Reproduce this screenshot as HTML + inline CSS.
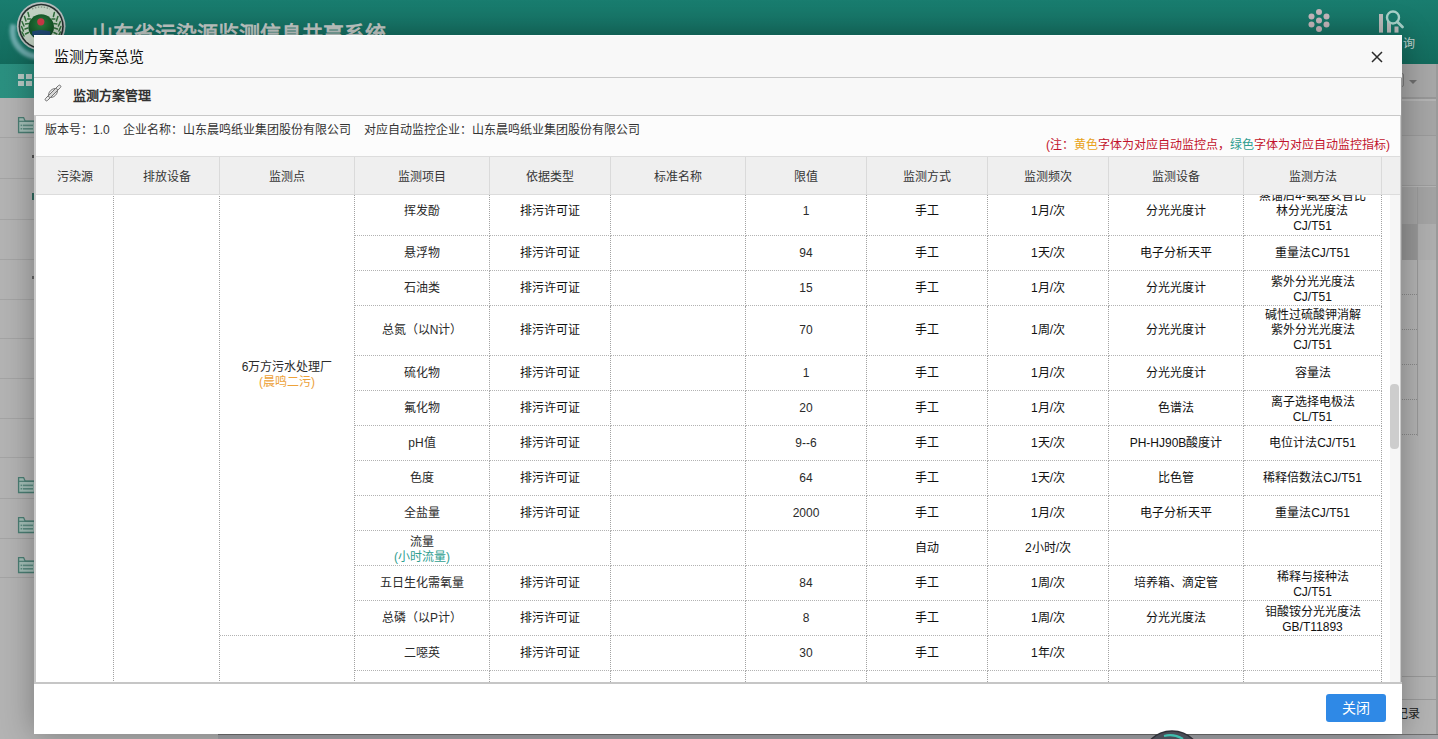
<!DOCTYPE html>
<html lang="zh-CN"><head><meta charset="utf-8">
<style>
*{margin:0;padding:0;box-sizing:border-box}
html,body{width:1438px;height:739px;overflow:hidden}
body{position:relative;background:#b3b3b3;font-family:"Liberation Sans",sans-serif;font-size:12px;color:#333}
.abs{position:absolute}
#hdr{position:absolute;left:0;top:0;width:1438px;height:64px;background:linear-gradient(#197d6f,#136b5d)}
#nav{position:absolute;left:0;top:64px;width:300px;height:34px;background:linear-gradient(90deg,#2b9080,#268676)}
#ttl{position:absolute;left:92px;top:22px;font-size:21px;line-height:24px;font-weight:bold;color:#c6cdca;white-space:nowrap}
.sl{position:absolute;left:0;width:34px;height:1px;background:#a4a4a4}
.fd{position:absolute;left:17px;width:18px;height:18px}
#modal{position:absolute;left:34px;top:35px;width:1368px;height:699px;background:#fff;box-shadow:0 0 30px rgba(0,0,0,.32)}
#mt{position:absolute;left:34px;top:35px;width:1368px;height:43px;background:#f8f8f8;border-top:1px solid #fcfefe;border-bottom:1px solid #c8c8c8}
#mt .tx{position:absolute;left:20px;top:9px;font-size:15px;font-weight:300;color:#111}
#close{position:absolute;left:1371px;top:51px;width:12px;height:12px}
#ph{position:absolute;left:34px;top:78px;width:1367px;height:38px;background:#f8f8f8;border-bottom:1px solid #c8c8c8}
#ph .tx{position:absolute;left:39px;top:7px;font-size:13px;font-weight:bold;color:#333}
#cw{position:absolute;left:34px;top:116px;width:1367px;height:566px;border-left:2px solid #c8c8c8;border-right:1px solid #c8c8c8}
#strip{position:absolute;left:1401px;top:78px;width:1px;height:604px;background:#989898}
#info{position:absolute;left:35px;top:116px;width:1365px;height:40px;background:#fcfcfc}
#info .tx{position:absolute;left:10px;top:4px;white-space:nowrap;color:#333}
#info .note{position:absolute;right:10px;top:19px;white-space:nowrap;color:#c2132b}
.yel{color:#e8a317} .grn{color:#2f9e90} .org{color:#eda23a}
#th{position:absolute;left:35px;top:156px;width:1365px;height:39px;background:#efefef;border-top:1px solid #ddd;border-bottom:1px solid #dcdcdc}
.hc{position:absolute;top:0;height:37px;line-height:40px;text-align:center;color:#363636;border-right:1px solid #dadada}
#tb{position:absolute;left:35px;top:195px;width:1365px;height:487px;overflow:hidden;background:#fff}
.c{position:absolute;display:flex;align-items:center;justify-content:center;text-align:center;line-height:15px;border-right:1px dotted #a2a2a2;border-bottom:1px dotted #b2b2b2}
.t0{color:#111} .t3{color:#2a2a2a} .ml2{padding-top:3px}
#sb{position:absolute;left:1355px;top:0;width:10px;height:488px;background:#f6f6f6}
#thumb{position:absolute;left:0;top:189px;width:9px;height:65px;background:#cdcdcd;border-radius:4px}
#ft{position:absolute;left:34px;top:682px;width:1368px;height:52px;border-top:2px solid #c6c6c6;background:#fff}
#btn{position:absolute;left:1326px;top:694px;width:60px;height:28px;background:#2f89e6;border-radius:3px;color:#fff;font-size:14px;line-height:28px;text-align:center}
</style></head><body>
<div id="hdr">
  <svg class="abs" style="left:0;top:0" width="80" height="64" viewBox="0 0 80 64">
<defs><filter id="bl" x="-50%" y="-50%" width="200%" height="200%"><feGaussianBlur stdDeviation="1.6"/></filter>
<radialGradient id="ball" cx="0.5" cy="0.4" r="0.6"><stop offset="0" stop-color="#2a8040"/><stop offset="1" stop-color="#0e4a20"/></radialGradient></defs>
<path d="M13.4 24.4 A25.5 25.5 0 0 0 44.6 55.6" fill="none" stroke="#9ccbd4" stroke-width="6" opacity="0.65" filter="url(#bl)"/>
<circle cx="41.2" cy="26.3" r="24.3" fill="#b5bdbd"/>
<circle cx="41.2" cy="26.3" r="22.6" fill="#27302f"/>
<circle cx="41.2" cy="26.3" r="21" fill="#c3d3c4"/>
<g stroke="#2f6e3a" stroke-width="1.5" fill="none" stroke-linecap="round"><path d="M24 36 l-2 -4 M23.5 31 l-2 -4.5 M24 26 l-2 -4.5 M26 21 l-1.5 -4.5 M29 16.5 l-1 -4"/><path d="M25.5 34 l3 -1.5 M25 29 l3 -1 M25.5 24 l3 -0.5 M27.5 19 l3 0"/><path d="M58.4 36 l2 -4 M58.9 31 l2 -4.5 M58.4 26 l2 -4.5 M56.4 21 l1.5 -4.5 M53.4 16.5 l1 -4"/><path d="M56.9 34 l-3 -1.5 M57.4 29 l-3 -1 M56.9 24 l-3 -0.5 M54.9 19 l-3 0"/></g>
<path d="M32 9 Q41 5 50 9" fill="none" stroke="#8a9a8c" stroke-width="1.4" stroke-dasharray="1.5 1.5"/>
<circle cx="41.2" cy="27" r="12.8" fill="url(#ball)"/>
<circle cx="40.8" cy="21.8" r="3.6" fill="#cf3a48"/>
<path d="M32 31.5 Q41 28.5 50.5 31.5 L50 36 Q41 33 32.5 36 Z" fill="#23438a" opacity="0.8"/>
</svg>
  <div id="ttl">山东省污染源监测信息共享系统</div>
  <div class="abs" style="left:1308px;top:9px;width:22px;height:23px;">
    <svg width="22" height="23" viewBox="0 0 22 23"><g fill="#c7b8bd"><circle cx="11" cy="3" r="3"/><circle cx="3.5" cy="7.5" r="3"/><circle cx="18.5" cy="7.5" r="3"/><circle cx="11" cy="11.5" r="3"/><circle cx="3.5" cy="15.5" r="3"/><circle cx="18.5" cy="15.5" r="3"/><circle cx="11" cy="20" r="3"/></g></svg>
  </div>
  <svg class="abs" style="left:1376px;top:8px" width="32" height="28" viewBox="0 0 32 28"><g fill="#bdbdbd"><rect x="3" y="6" width="4" height="18.6"/><rect x="11" y="10" width="4" height="14.6"/><rect x="18.5" y="18.5" width="4" height="6.1"/></g><circle cx="17" cy="9.5" r="6" fill="#197a6c" stroke="#a9d2ca" stroke-width="2.4"/><path d="M21.2 13.7 L26.5 19" stroke="#a9d2ca" stroke-width="2.8" stroke-linecap="round"/></svg>
  <div class="abs" style="left:1403px;top:36px;font-size:12px;line-height:16px;color:#c3d3cf">询</div>
</div>
<div id="nav"><svg class="abs" style="left:18px;top:74px;position:fixed" width="15" height="13" viewBox="0 0 15 13"><g fill="#b7c9c4"><rect x="0" y="0" width="6" height="5"/><rect x="8" y="0" width="6" height="5"/><rect x="0" y="7" width="6" height="5"/><rect x="8" y="7" width="6" height="5"/></g></svg></div>
<div class="sl" style="top:137px"></div><div class="sl" style="top:178px"></div><div class="sl" style="top:219px"></div><div class="sl" style="top:259px"></div><div class="sl" style="top:299px"></div><div class="sl" style="top:338px"></div><div class="sl" style="top:378px"></div><div class="sl" style="top:418px"></div><div class="sl" style="top:457px"></div><div class="sl" style="top:498px"></div><div class="sl" style="top:538px"></div><div class="sl" style="top:577px"></div>
<div class="abs" style="left:32px;top:155px;width:2px;height:3px;background:#555"></div>
<div class="abs" style="left:32px;top:193px;width:2px;height:7px;background:#2f6a5e"></div>
<div class="abs" style="left:32px;top:276px;width:2px;height:3px;background:#666"></div>
<div class="fd" style="top:116px"><svg width="18" height="18" viewBox="0 0 18 18"><path d="M1.6 16.5 V1.6 H6.6 L8.2 5.2 H17.5 V16.5 Z" fill="#a4bfb8" stroke="#4a7e73" stroke-width="1.3"/><path d="M1.6 5.3 H17.5" stroke="#4a7e73" stroke-width="1.1"/><rect x="3.6" y="8.6" width="1.6" height="1.5" fill="#5c8c82"/><rect x="6" y="8.6" width="10" height="1.6" fill="#5c8c82"/><rect x="3.6" y="12" width="1.6" height="1.5" fill="#5c8c82"/><rect x="6" y="12" width="10" height="1.6" fill="#5c8c82"/></svg></div><div class="fd" style="top:476px"><svg width="18" height="18" viewBox="0 0 18 18"><path d="M1.6 16.5 V1.6 H6.6 L8.2 5.2 H17.5 V16.5 Z" fill="#a4bfb8" stroke="#4a7e73" stroke-width="1.3"/><path d="M1.6 5.3 H17.5" stroke="#4a7e73" stroke-width="1.1"/><rect x="3.6" y="8.6" width="1.6" height="1.5" fill="#5c8c82"/><rect x="6" y="8.6" width="10" height="1.6" fill="#5c8c82"/><rect x="3.6" y="12" width="1.6" height="1.5" fill="#5c8c82"/><rect x="6" y="12" width="10" height="1.6" fill="#5c8c82"/></svg></div><div class="fd" style="top:516px"><svg width="18" height="18" viewBox="0 0 18 18"><path d="M1.6 16.5 V1.6 H6.6 L8.2 5.2 H17.5 V16.5 Z" fill="#a4bfb8" stroke="#4a7e73" stroke-width="1.3"/><path d="M1.6 5.3 H17.5" stroke="#4a7e73" stroke-width="1.1"/><rect x="3.6" y="8.6" width="1.6" height="1.5" fill="#5c8c82"/><rect x="6" y="8.6" width="10" height="1.6" fill="#5c8c82"/><rect x="3.6" y="12" width="1.6" height="1.5" fill="#5c8c82"/><rect x="6" y="12" width="10" height="1.6" fill="#5c8c82"/></svg></div><div class="fd" style="top:556px"><svg width="18" height="18" viewBox="0 0 18 18"><path d="M1.6 16.5 V1.6 H6.6 L8.2 5.2 H17.5 V16.5 Z" fill="#a4bfb8" stroke="#4a7e73" stroke-width="1.3"/><path d="M1.6 5.3 H17.5" stroke="#4a7e73" stroke-width="1.1"/><rect x="3.6" y="8.6" width="1.6" height="1.5" fill="#5c8c82"/><rect x="6" y="8.6" width="10" height="1.6" fill="#5c8c82"/><rect x="3.6" y="12" width="1.6" height="1.5" fill="#5c8c82"/><rect x="6" y="12" width="10" height="1.6" fill="#5c8c82"/></svg></div>
<div class="abs" style="left:1401px;top:64px;width:37px;height:35px;background:#a7a7a7;border-bottom:2px solid #979797"></div>
<div class="abs" style="left:1380px;top:73px;width:24px;height:14px;border:1px solid #7d7d7d;border-radius:2px"></div>
<div class="abs" style="left:1409px;top:80px;width:0;height:0;border-left:4px solid transparent;border-right:4px solid transparent;border-top:4px solid #6e6e6e"></div>
<div class="abs" style="left:1401px;top:101px;width:37px;height:35px;background:#a5a5a5;border-bottom:1px solid #9a9a9a"></div>
<div class="abs" style="left:1401px;top:136px;width:37px;height:50px;background:#a9a9a9;border-bottom:1px solid #9c9c9c"></div>
<div class="abs" style="left:1401px;top:187px;width:37px;height:37px;background:#a3a3a3"></div>
<div class="abs" style="left:1401px;top:224px;width:16px;height:36px;background:#979797"></div>
<div class="abs" style="left:1417px;top:224px;width:21px;height:36px;background:#aeaeae"></div>
<div class="abs" style="left:1417px;top:187px;width:1px;height:249px;background:#999"></div>
<div class="abs" style="left:1401px;top:294px;width:16px;height:1px;border-top:1px dotted #8a8a8a"></div><div class="abs" style="left:1401px;top:329px;width:16px;height:1px;border-top:1px dotted #8a8a8a"></div><div class="abs" style="left:1401px;top:364px;width:16px;height:1px;border-top:1px dotted #8a8a8a"></div><div class="abs" style="left:1401px;top:399px;width:16px;height:1px;border-top:1px dotted #8a8a8a"></div><div class="abs" style="left:1401px;top:434px;width:16px;height:1px;border-top:1px dotted #8a8a8a"></div>
<div class="abs" style="left:1401px;top:676px;width:37px;height:1px;background:#9a9a9a"></div>
<div class="abs" style="left:1401px;top:699px;width:37px;height:1px;background:#9a9a9a"></div>
<div class="abs" style="left:1396px;top:706px;font-size:12px;line-height:16px;color:#1a1a1a;">记录</div>
<div class="abs" style="left:1436px;top:64px;width:2px;height:670px;background:#9a9a9a"></div>
<div class="abs" style="left:218px;top:734px;width:1220px;height:5px;background:#a3a4a8;border-top:1px solid #707070"></div>

<div id="modal"></div>
<div id="mt"><div class="tx">监测方案总览</div></div>
<svg id="close" viewBox="0 0 12 12"><path d="M1 1L11 11M11 1L1 11" stroke="#2a2a2a" stroke-width="1.5"/></svg>
<div id="ph">
  <svg class="abs" style="left:9px;top:5px" width="20" height="20" viewBox="0 0 20 20"><g transform="rotate(-45 10 10)" fill="none" stroke="#6a6a6a" stroke-width="0.9"><rect x="-0.5" y="8.6" width="21" height="2.8" rx="1.4" fill="#e8e8e8"/><ellipse cx="10" cy="10" rx="5.2" ry="3.4" fill="#ececec"/><rect x="4.5" y="8.6" width="11" height="2.8" fill="#d8d8d8"/></g></svg>
  <div class="tx">监测方案管理</div>
</div>
<div id="strip"></div>
<div id="info">
  <div class="tx">版本号：1.0&nbsp;&nbsp;&nbsp;&nbsp;企业名称：山东晨鸣纸业集团股份有限公司&nbsp;&nbsp;&nbsp;&nbsp;对应自动监控企业：山东晨鸣纸业集团股份有限公司</div>
  <div class="note">(注：<span class="yel">黄色</span>字体为对应自动监控点，<span class="grn">绿色</span>字体为对应自动监控指标)</div>
</div>
<div id="th"><div class="hc" style="left:1px;width:78px">污染源</div><div class="hc" style="left:79px;width:106px">排放设备</div><div class="hc" style="left:185px;width:135px">监测点</div><div class="hc" style="left:320px;width:135px">监测项目</div><div class="hc" style="left:455px;width:121px">依据类型</div><div class="hc" style="left:576px;width:135px">标准名称</div><div class="hc" style="left:711px;width:121px">限值</div><div class="hc" style="left:832px;width:121px">监测方式</div><div class="hc" style="left:953px;width:121px">监测频次</div><div class="hc" style="left:1074px;width:135px">监测设备</div><div class="hc" style="left:1209px;width:138px">监测方法</div></div>
<div id="tb"><div class="c " style="left:320px;top:-8px;width:135px;height:49px"><span class="t3">挥发酚</span></div><div class="c " style="left:455px;top:-8px;width:121px;height:49px"><span class="t0">排污许可证</span></div><div class="c " style="left:576px;top:-8px;width:135px;height:49px"></div><div class="c " style="left:711px;top:-8px;width:121px;height:49px"><span class="t3">1</span></div><div class="c " style="left:832px;top:-8px;width:121px;height:49px"><span class="t0">手工</span></div><div class="c " style="left:953px;top:-8px;width:121px;height:49px"><span class="t0">1月/次</span></div><div class="c " style="left:1074px;top:-8px;width:135px;height:49px"><span class="t0">分光光度计</span></div><div class="c " style="left:1209px;top:-8px;width:138px;height:49px"><span class="t0">蒸馏后4-氨基安替比<br>林分光光度法<br>CJ/T51</span></div><div class="c " style="left:320px;top:41px;width:135px;height:35px"><span class="t3">悬浮物</span></div><div class="c " style="left:455px;top:41px;width:121px;height:35px"><span class="t0">排污许可证</span></div><div class="c " style="left:576px;top:41px;width:135px;height:35px"></div><div class="c " style="left:711px;top:41px;width:121px;height:35px"><span class="t3">94</span></div><div class="c " style="left:832px;top:41px;width:121px;height:35px"><span class="t0">手工</span></div><div class="c " style="left:953px;top:41px;width:121px;height:35px"><span class="t0">1天/次</span></div><div class="c " style="left:1074px;top:41px;width:135px;height:35px"><span class="t0">电子分析天平</span></div><div class="c " style="left:1209px;top:41px;width:138px;height:35px"><span class="t0">重量法CJ/T51</span></div><div class="c " style="left:320px;top:76px;width:135px;height:35px"><span class="t3">石油类</span></div><div class="c " style="left:455px;top:76px;width:121px;height:35px"><span class="t0">排污许可证</span></div><div class="c " style="left:576px;top:76px;width:135px;height:35px"></div><div class="c " style="left:711px;top:76px;width:121px;height:35px"><span class="t3">15</span></div><div class="c " style="left:832px;top:76px;width:121px;height:35px"><span class="t0">手工</span></div><div class="c " style="left:953px;top:76px;width:121px;height:35px"><span class="t0">1月/次</span></div><div class="c " style="left:1074px;top:76px;width:135px;height:35px"><span class="t0">分光光度计</span></div><div class="c ml2" style="left:1209px;top:76px;width:138px;height:35px"><span class="t0">紫外分光光度法<br>CJ/T51</span></div><div class="c " style="left:320px;top:111px;width:135px;height:50px"><span class="t3">总氮（以N计）</span></div><div class="c " style="left:455px;top:111px;width:121px;height:50px"><span class="t0">排污许可证</span></div><div class="c " style="left:576px;top:111px;width:135px;height:50px"></div><div class="c " style="left:711px;top:111px;width:121px;height:50px"><span class="t3">70</span></div><div class="c " style="left:832px;top:111px;width:121px;height:50px"><span class="t0">手工</span></div><div class="c " style="left:953px;top:111px;width:121px;height:50px"><span class="t0">1周/次</span></div><div class="c " style="left:1074px;top:111px;width:135px;height:50px"><span class="t0">分光光度计</span></div><div class="c " style="left:1209px;top:111px;width:138px;height:50px"><span class="t0">碱性过硫酸钾消解<br>紫外分光光度法<br>CJ/T51</span></div><div class="c " style="left:320px;top:161px;width:135px;height:35px"><span class="t3">硫化物</span></div><div class="c " style="left:455px;top:161px;width:121px;height:35px"><span class="t0">排污许可证</span></div><div class="c " style="left:576px;top:161px;width:135px;height:35px"></div><div class="c " style="left:711px;top:161px;width:121px;height:35px"><span class="t3">1</span></div><div class="c " style="left:832px;top:161px;width:121px;height:35px"><span class="t0">手工</span></div><div class="c " style="left:953px;top:161px;width:121px;height:35px"><span class="t0">1月/次</span></div><div class="c " style="left:1074px;top:161px;width:135px;height:35px"><span class="t0">分光光度计</span></div><div class="c " style="left:1209px;top:161px;width:138px;height:35px"><span class="t0">容量法</span></div><div class="c " style="left:320px;top:196px;width:135px;height:35px"><span class="t3">氟化物</span></div><div class="c " style="left:455px;top:196px;width:121px;height:35px"><span class="t0">排污许可证</span></div><div class="c " style="left:576px;top:196px;width:135px;height:35px"></div><div class="c " style="left:711px;top:196px;width:121px;height:35px"><span class="t3">20</span></div><div class="c " style="left:832px;top:196px;width:121px;height:35px"><span class="t0">手工</span></div><div class="c " style="left:953px;top:196px;width:121px;height:35px"><span class="t0">1月/次</span></div><div class="c " style="left:1074px;top:196px;width:135px;height:35px"><span class="t0">色谱法</span></div><div class="c ml2" style="left:1209px;top:196px;width:138px;height:35px"><span class="t0">离子选择电极法<br>CL/T51</span></div><div class="c " style="left:320px;top:231px;width:135px;height:35px"><span class="t3">pH值</span></div><div class="c " style="left:455px;top:231px;width:121px;height:35px"><span class="t0">排污许可证</span></div><div class="c " style="left:576px;top:231px;width:135px;height:35px"></div><div class="c " style="left:711px;top:231px;width:121px;height:35px"><span class="t3">9--6</span></div><div class="c " style="left:832px;top:231px;width:121px;height:35px"><span class="t0">手工</span></div><div class="c " style="left:953px;top:231px;width:121px;height:35px"><span class="t0">1天/次</span></div><div class="c " style="left:1074px;top:231px;width:135px;height:35px"><span class="t0">PH-HJ90B酸度计</span></div><div class="c " style="left:1209px;top:231px;width:138px;height:35px"><span class="t0">电位计法CJ/T51</span></div><div class="c " style="left:320px;top:266px;width:135px;height:35px"><span class="t3">色度</span></div><div class="c " style="left:455px;top:266px;width:121px;height:35px"><span class="t0">排污许可证</span></div><div class="c " style="left:576px;top:266px;width:135px;height:35px"></div><div class="c " style="left:711px;top:266px;width:121px;height:35px"><span class="t3">64</span></div><div class="c " style="left:832px;top:266px;width:121px;height:35px"><span class="t0">手工</span></div><div class="c " style="left:953px;top:266px;width:121px;height:35px"><span class="t0">1天/次</span></div><div class="c " style="left:1074px;top:266px;width:135px;height:35px"><span class="t0">比色管</span></div><div class="c " style="left:1209px;top:266px;width:138px;height:35px"><span class="t0">稀释倍数法CJ/T51</span></div><div class="c " style="left:320px;top:301px;width:135px;height:35px"><span class="t3">全盐量</span></div><div class="c " style="left:455px;top:301px;width:121px;height:35px"><span class="t0">排污许可证</span></div><div class="c " style="left:576px;top:301px;width:135px;height:35px"></div><div class="c " style="left:711px;top:301px;width:121px;height:35px"><span class="t3">2000</span></div><div class="c " style="left:832px;top:301px;width:121px;height:35px"><span class="t0">手工</span></div><div class="c " style="left:953px;top:301px;width:121px;height:35px"><span class="t0">1月/次</span></div><div class="c " style="left:1074px;top:301px;width:135px;height:35px"><span class="t0">电子分析天平</span></div><div class="c " style="left:1209px;top:301px;width:138px;height:35px"><span class="t0">重量法CJ/T51</span></div><div class="c ml2" style="left:320px;top:336px;width:135px;height:35px"><span class="t3">流量<br><span class="grn">(小时流量)</span></span></div><div class="c " style="left:455px;top:336px;width:121px;height:35px"><span class="t0"></span></div><div class="c " style="left:576px;top:336px;width:135px;height:35px"></div><div class="c " style="left:711px;top:336px;width:121px;height:35px"><span class="t3"></span></div><div class="c " style="left:832px;top:336px;width:121px;height:35px"><span class="t0">自动</span></div><div class="c " style="left:953px;top:336px;width:121px;height:35px"><span class="t0">2小时/次</span></div><div class="c " style="left:1074px;top:336px;width:135px;height:35px"><span class="t0"></span></div><div class="c " style="left:1209px;top:336px;width:138px;height:35px"><span class="t0"></span></div><div class="c " style="left:320px;top:371px;width:135px;height:35px"><span class="t3">五日生化需氧量</span></div><div class="c " style="left:455px;top:371px;width:121px;height:35px"><span class="t0">排污许可证</span></div><div class="c " style="left:576px;top:371px;width:135px;height:35px"></div><div class="c " style="left:711px;top:371px;width:121px;height:35px"><span class="t3">84</span></div><div class="c " style="left:832px;top:371px;width:121px;height:35px"><span class="t0">手工</span></div><div class="c " style="left:953px;top:371px;width:121px;height:35px"><span class="t0">1周/次</span></div><div class="c " style="left:1074px;top:371px;width:135px;height:35px"><span class="t0">培养箱、滴定管</span></div><div class="c ml2" style="left:1209px;top:371px;width:138px;height:35px"><span class="t0">稀释与接种法<br>CJ/T51</span></div><div class="c " style="left:320px;top:406px;width:135px;height:35px"><span class="t3">总磷（以P计）</span></div><div class="c " style="left:455px;top:406px;width:121px;height:35px"><span class="t0">排污许可证</span></div><div class="c " style="left:576px;top:406px;width:135px;height:35px"></div><div class="c " style="left:711px;top:406px;width:121px;height:35px"><span class="t3">8</span></div><div class="c " style="left:832px;top:406px;width:121px;height:35px"><span class="t0">手工</span></div><div class="c " style="left:953px;top:406px;width:121px;height:35px"><span class="t0">1周/次</span></div><div class="c " style="left:1074px;top:406px;width:135px;height:35px"><span class="t0">分光光度法</span></div><div class="c ml2" style="left:1209px;top:406px;width:138px;height:35px"><span class="t0">钼酸铵分光光度法<br>GB/T11893</span></div><div class="c " style="left:320px;top:441px;width:135px;height:35px"><span class="t3">二噁英</span></div><div class="c " style="left:455px;top:441px;width:121px;height:35px"><span class="t0">排污许可证</span></div><div class="c " style="left:576px;top:441px;width:135px;height:35px"></div><div class="c " style="left:711px;top:441px;width:121px;height:35px"><span class="t3">30</span></div><div class="c " style="left:832px;top:441px;width:121px;height:35px"><span class="t0">手工</span></div><div class="c " style="left:953px;top:441px;width:121px;height:35px"><span class="t0">1年/次</span></div><div class="c " style="left:1074px;top:441px;width:135px;height:35px"><span class="t0"></span></div><div class="c " style="left:1209px;top:441px;width:138px;height:35px"><span class="t0"></span></div><div class="c " style="left:320px;top:476px;width:135px;height:35px"><span class="t3"></span></div><div class="c " style="left:455px;top:476px;width:121px;height:35px"><span class="t0"></span></div><div class="c " style="left:576px;top:476px;width:135px;height:35px"></div><div class="c " style="left:711px;top:476px;width:121px;height:35px"><span class="t3"></span></div><div class="c " style="left:832px;top:476px;width:121px;height:35px"><span class="t0"></span></div><div class="c " style="left:953px;top:476px;width:121px;height:35px"><span class="t0"></span></div><div class="c " style="left:1074px;top:476px;width:135px;height:35px"><span class="t0"></span></div><div class="c " style="left:1209px;top:476px;width:138px;height:35px"><span class="t0"></span></div><div class="c " style="left:1px;top:-94px;width:78px;height:700px"></div><div class="c " style="left:79px;top:-94px;width:106px;height:700px"></div><div class="c " style="left:185px;top:-80px;width:135px;height:521px"><span class="t3">6万方污水处理厂<br><span class="org">(晨鸣二污)</span></span></div><div class="c " style="left:185px;top:441px;width:135px;height:265px"></div>
  <div id="sb"><div id="thumb"></div></div>
</div>
<div id="cw"></div>
<div id="ft"></div>
<div id="btn">关闭</div>
<svg class="abs" style="left:1140px;top:729px" width="64" height="10" viewBox="0 0 64 10"><circle cx="32" cy="32.5" r="30.5" fill="#4a4e58" stroke="#2e3138" stroke-width="1.5"/><path d="M24 7 Q34 4.5 43 10" fill="none" stroke="#3fc0b0" stroke-width="2.2"/></svg>
</body></html>
